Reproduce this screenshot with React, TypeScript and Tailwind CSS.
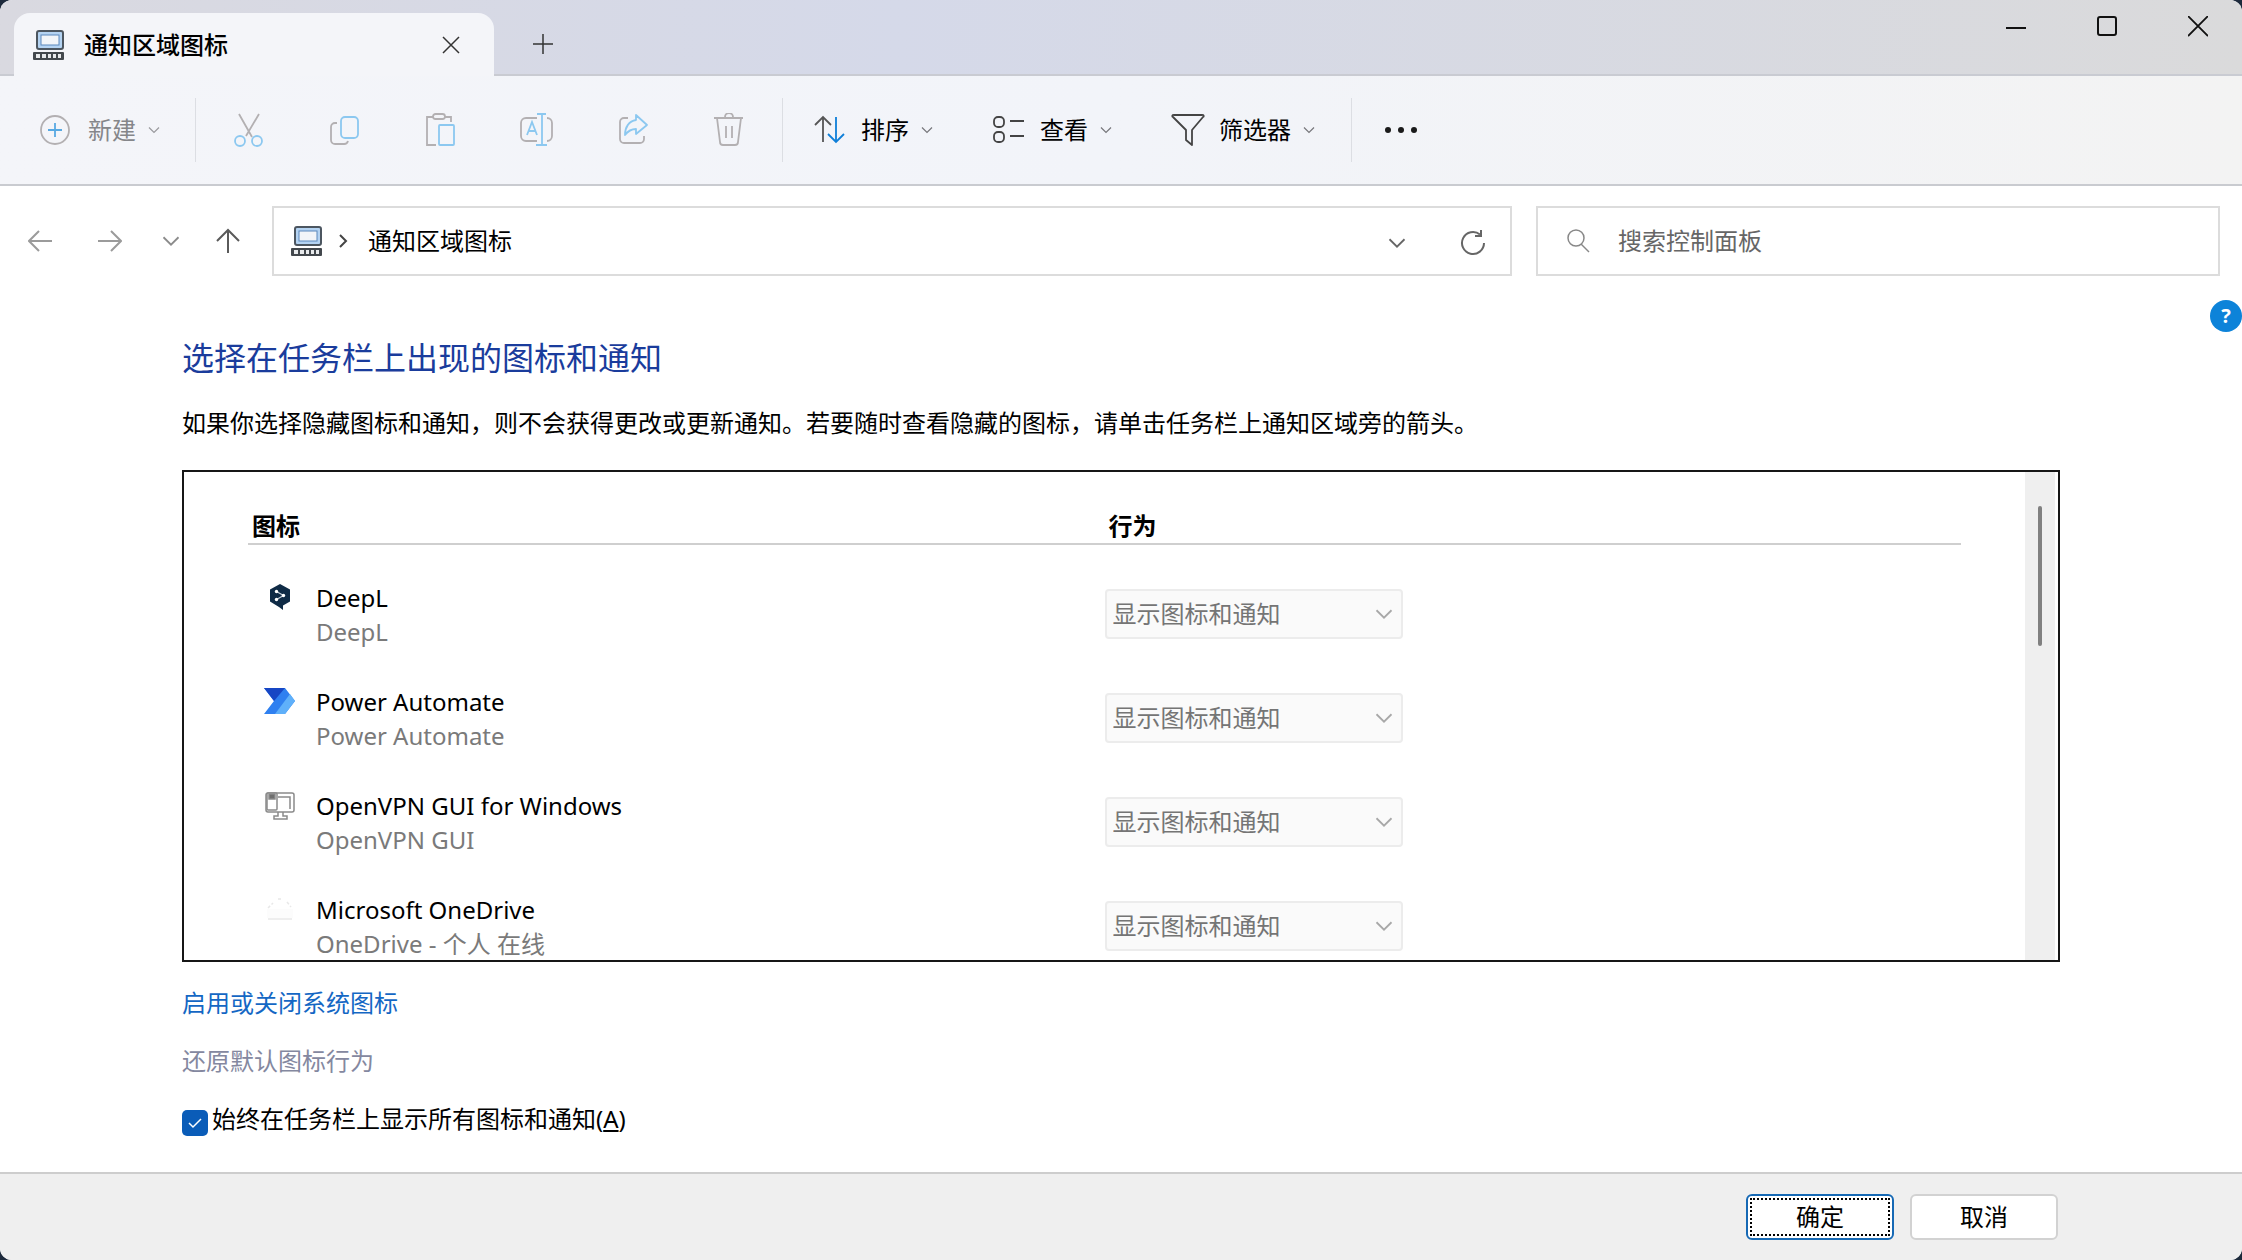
import type { ReactNode } from 'react'

type TrayItem = {
  name: string
  detail: string
  icon: ReactNode
}

const grey = '#b3b0b2'
const blue = '#8cc8f0'

function TaskbarIcon() {
  return (
    <svg width="34" height="34" viewBox="0 0 34 34" fill="none" className="shrink-0">
      <rect x="5" y="3" width="26" height="18" rx="2" fill="#b4d3f2" stroke="#4c5660" strokeWidth="2" />
      <rect x="9" y="7" width="18" height="10" fill="#f2f5f9" stroke="#5a88bc" strokeWidth="1" />
      <rect x="1" y="24" width="31" height="8" rx="1" fill="#43484d" />
      <path d="M4 26h4v4H4zM10 26h4v4h-4zM16 26h3v4h-3zM21 26h3v4h-3zM26 26h3v4h-3z" fill="#e8eaec" />
    </svg>
  )
}

function Chevron({ className = '', size = 12 }: { className?: string; size?: number }) {
  return (
    <svg width={size} height={size} viewBox="0 0 12 12" fill="none" stroke="currentColor" className={className}>
      <path d="M1 3.5l5 5 5-5" strokeWidth="1.2" />
    </svg>
  )
}

const deepl = (
  <svg width="24" height="28" viewBox="0 0 24 28">
    <path d="M12 1l10 5.5v12L15 22.5V27l-4-3-9-5.5v-12z" fill="#0f2b46" />
    <path d="M8.5 8.5l7 4-7 4" stroke="#c6d0da" strokeWidth="1.2" fill="none" />
    <circle cx="8.5" cy="8.5" r="1.7" fill="#fff" />
    <circle cx="15.5" cy="12.5" r="1.7" fill="#fff" />
    <circle cx="8.5" cy="16.5" r="1.7" fill="#fff" />
  </svg>
)

const powerAutomate = (
  <svg width="34" height="28" viewBox="0 0 34 28">
    <path d="M1 1h21l10 13-10 13H1l10-13z" fill="#2f80f0" />
    <path d="M27 7l5 7-10 13H12z" fill="#5fb0fa" />
    <path d="M1 1h21L11 14z" fill="#1746c4" />
  </svg>
)

const openVpn = (
  <svg width="32" height="30" viewBox="0 0 32 30" fill="none" stroke="#8a8a8a" strokeWidth="1.5">
    <rect x="2" y="2" width="28" height="19" rx="2" />
    <path d="M14 6h12v12" />
    <rect x="3" y="2" width="10" height="17" rx="1" fill="#fff" />
    <path d="M5 3h6v5H5z" fill="#6f6f6f" />
    <path d="M14 21v4h-4v3h13v-3h-4v-4" />
  </svg>
)

const oneDrive = (
  <svg width="32" height="28" viewBox="0 0 32 28" fill="none" stroke="#e8e8e8" strokeWidth="1.5">
    <path d="M3 14v9h26v-9z" fill="#fcfcfc" stroke="none" />
    <path d="M4 24h24" />
    <path d="M4 13l5-5M14 4h4M23 7l4 5" strokeDasharray="3 2" />
  </svg>
)

const items: TrayItem[] = [
  { name: 'DeepL', detail: 'DeepL', icon: deepl },
  { name: 'Power Automate', detail: 'Power Automate', icon: powerAutomate },
  { name: 'OpenVPN GUI for Windows', detail: 'OpenVPN GUI', icon: openVpn },
  { name: 'Microsoft OneDrive', detail: 'OneDrive - 个人 在线', icon: oneDrive },
]

const editActions = [
  {
    label: '剪切',
    icon: (
      <>
        <path d="M7 1l13 23M27 1L14 23" stroke={grey} />
        <circle cx="8" cy="28" r="5" stroke={blue} />
        <circle cx="25" cy="28" r="5" stroke={blue} />
      </>
    ),
  },
  {
    label: '复制',
    icon: (
      <>
        <path d="M9 10H7a4 4 0 0 0-4 4v13a4 4 0 0 0 4 4h9a4 4 0 0 0 4-3" stroke={grey} />
        <rect x="13" y="4" width="17" height="21" rx="4" stroke={blue} />
      </>
    ),
  },
  {
    label: '粘贴',
    icon: (
      <>
        <path d="M10 4H3v28h9M21 4h6v5" stroke={grey} />
        <rect x="9" y="1" width="12" height="5" rx="2.5" stroke={grey} />
        <rect x="15" y="12" width="15" height="20" rx="1" stroke={blue} />
      </>
    ),
  },
  {
    label: '重命名',
    icon: (
      <>
        <path d="M17 5H6a5 5 0 0 0-5 5v13a5 5 0 0 0 5 5h11M27 5a5 5 0 0 1 5 5v13a5 5 0 0 1-5 5" stroke={grey} />
        <path d="M17 1h9M22 1v31M16 32h11M7 22l5-13 5 13M9 18h6" stroke={blue} />
      </>
    ),
  },
  {
    label: '共享',
    icon: (
      <>
        <path d="M12 5H8a4 4 0 0 0-4 4v17a4 4 0 0 0 4 4h16a4 4 0 0 0 4-4v-3" stroke={grey} />
        <path d="M20 2l11 10-11 9v-5c-5 0-8 2-11 6 0-8 4-14 11-15z" stroke={blue} strokeLinejoin="round" />
      </>
    ),
  },
  {
    label: '删除',
    icon: (
      <path
        d="M2 5h29M13 5V4a4 4 0 0 1 8 0v1M5 5l3 24a3 3 0 0 0 3 3h12a3 3 0 0 0 3-3l3-24M14 13v12M20 13v12"
        stroke={grey}
      />
    ),
  },
]

const viewActions = [
  {
    label: '排序',
    icon: (
      <>
        <path d="M10 29V4M2 12l8-8 8 8" stroke="#555" />
        <path d="M23 4v25M15 21l8 8 8-8" stroke="#0f7fd8" />
      </>
    ),
  },
  {
    label: '查看',
    icon: (
      <>
        <rect x="2" y="4" width="10" height="10" rx="4" stroke="#444" />
        <rect x="2" y="19" width="10" height="10" rx="4" stroke="#444" />
        <path d="M18 8h14M18 23h14" stroke="#444" />
      </>
    ),
  },
  {
    label: '筛选器',
    icon: <path d="M3 2h28a1 1 0 0 1 1 2L21 17v15l-6-5V17L2 4a1 1 0 0 1 1-2z" stroke="#444" strokeLinejoin="round" />,
  },
]

function ToolIcon({ children }: { children: ReactNode }) {
  return (
    <svg width="34" height="34" viewBox="0 0 34 34" fill="none" strokeWidth="1.8" className="shrink-0">
      {children}
    </svg>
  )
}

function Divider() {
  return <div className="h-16 w-px shrink-0 bg-[#dcdee3]" />
}

function TitleBar() {
  return (
    <header className="flex h-[76px] items-end border-b-2 border-[#c9cbd2] bg-linear-to-r from-[#d9d9e0] via-[#d5d9e9] via-40% to-[#dadadb]">
      <div className="relative -mb-0.5 ml-3.5 flex h-[63px] w-[480px] items-center rounded-t-2xl bg-[#f4f5f9] pl-[18px] pr-[30px]">
        <TaskbarIcon />
        <span className="ml-[18px] flex-1 font-medium">通知区域图标</span>
        <button aria-label="关闭标签页" className="p-1">
          <svg width="18" height="18" viewBox="0 0 18 18" stroke="#333" strokeWidth="1.5">
            <path d="M1 1l16 16M17 1L1 17" />
          </svg>
        </button>
      </div>
      <button aria-label="新建标签页" className="ml-9 flex h-[60px] items-center">
        <svg width="26" height="22" viewBox="0 0 22 22" stroke="#333" strokeWidth="1.5">
          <path d="M11 1v20M1 11h20" />
        </svg>
      </button>
      <div className="ml-auto flex gap-[71px] self-start pr-[34px] pt-4">
        <button aria-label="最小化">
          <svg width="20" height="22" viewBox="0 0 20 22" stroke="#111" strokeWidth="2">
            <path d="M0 12h20" />
          </svg>
        </button>
        <button aria-label="最大化">
          <svg width="20" height="22" viewBox="0 0 20 22" fill="none" stroke="#111" strokeWidth="2">
            <rect x="1" y="1" width="18" height="18" rx="2" />
          </svg>
        </button>
        <button aria-label="关闭">
          <svg width="20" height="22" viewBox="0 0 20 22" stroke="#111" strokeWidth="1.8">
            <path d="M0 0l20 20M20 0L0 20" />
          </svg>
        </button>
      </div>
    </header>
  )
}

function Toolbar() {
  return (
    <div className="flex h-[110px] items-center border-b-2 border-[#c9cbd0] bg-linear-to-r from-[#f4f5f9] via-[#f2f4f9] to-[#f3f3f3] pl-[38px]">
      <button disabled className="flex w-[157px] items-center text-[#85868a]">
        <ToolIcon>
          <circle cx="17" cy="17" r="14" stroke={grey} />
          <path d="M17 10v14M10 17h14" stroke="#58a9e2" />
        </ToolIcon>
        <span className="ml-4">新建</span>
        <Chevron className="ml-3 text-[#9a9a9e]" />
      </button>
      <Divider />
      <div className="flex gap-[62px] px-9">
        {editActions.map((action) => (
          <button key={action.label} disabled aria-label={action.label}>
            <ToolIcon>{action.icon}</ToolIcon>
          </button>
        ))}
      </div>
      <Divider />
      <div className="flex gap-[59px] pl-[30px] pr-9">
        {viewActions.map((action) => (
          <button key={action.label} className="flex items-center">
            <ToolIcon>{action.icon}</ToolIcon>
            <span className="ml-3.5">{action.label}</span>
            <Chevron className="ml-3 text-[#77777b]" />
          </button>
        ))}
      </div>
      <Divider />
      <button aria-label="更多" className="ml-8">
        <svg width="34" height="8" viewBox="0 0 34 8" fill="#1a1a1a">
          <circle cx="4" cy="4" r="3" />
          <circle cx="17" cy="4" r="3" />
          <circle cx="30" cy="4" r="3" />
        </svg>
      </button>
    </div>
  )
}

function AddressRow() {
  return (
    <div className="flex items-center py-5 pl-7 pr-[22px]">
      <nav className="flex w-[244px] shrink-0 items-center">
        <button aria-label="后退" className="text-[#9b9b9b]">
          <svg width="24" height="24" viewBox="0 0 24 24" fill="none" stroke="currentColor" strokeWidth="2">
            <path d="M24 12H1M11 2L1 12l10 10" />
          </svg>
        </button>
        <button aria-label="前进" className="ml-[46px] text-[#9b9b9b]">
          <svg width="24" height="24" viewBox="0 0 24 24" fill="none" stroke="currentColor" strokeWidth="2">
            <path d="M0 12h23M13 2l10 10-10 10" />
          </svg>
        </button>
        <button aria-label="最近位置" className="ml-10 text-[#8b8b8b]">
          <Chevron size={18} />
        </button>
        <button aria-label="向上" className="ml-9 text-[#5a5a5a]">
          <svg width="24" height="26" viewBox="0 0 24 26" fill="none" stroke="currentColor" strokeWidth="2">
            <path d="M12 25V2M1 13L12 2l11 11" />
          </svg>
        </button>
      </nav>
      <div className="flex h-[70px] flex-1 items-center border-2 border-[#dcdcdc] pl-4 pr-6">
        <TaskbarIcon />
        <svg width="10" height="14" viewBox="0 0 10 14" fill="none" stroke="#444" strokeWidth="2" className="ml-3.5">
          <path d="M2 1l6 6-6 6" />
        </svg>
        <span className="ml-5 flex-1">通知区域图标</span>
        <div className="flex items-center pt-1">
          <button aria-label="历史记录" className="text-[#666]">
            <Chevron size={18} />
          </button>
          <button aria-label="刷新" className="ml-[54px]">
            <svg width="26" height="26" viewBox="0 0 26 26" fill="none" stroke="#666" strokeWidth="2">
              <path d="M24 13a11 11 0 1 1-4-8.500M21 0v6h-6" />
            </svg>
          </button>
        </div>
      </div>
      <label className="ml-6 flex h-[70px] w-2/5 max-w-[684px] items-center border-2 border-[#dcdcdc] pl-7">
        <svg width="24" height="24" viewBox="0 0 24 24" fill="none" stroke="#888" strokeWidth="1.5">
          <circle cx="10" cy="9" r="8" />
          <path d="M15 15l8 8" />
        </svg>
        <input
          type="search"
          aria-label="搜索控制面板"
          placeholder="搜索控制面板"
          className="ml-7 w-0 flex-1 outline-none placeholder:text-[#666]"
        />
      </label>
    </div>
  )
}

function TrayList() {
  return (
    <div className="flex h-[492px] border-2 border-[#161616]">
      <div className="flex-1 overflow-hidden px-16 pt-9">
        <table className="w-full table-fixed border-collapse text-left">
          <thead>
            <tr className="h-9 border-b-2 border-[#cfcfcf]">
              <th className="w-1/2 p-0 pl-1">图标</th>
              <th className="p-0 pl-1">行为</th>
            </tr>
          </thead>
          <tbody>
            {items.map((item) => (
              <tr key={item.name} className="h-[104px] align-top">
                <td className="p-0 pt-9">
                  <div className="flex">
                    <div className="flex w-16 shrink-0 justify-center pt-0.5">{item.icon}</div>
                    <div className="pl-1">
                      <div>{item.name}</div>
                      <div className="text-[#7a7a7a]">{item.detail}</div>
                    </div>
                  </div>
                </td>
                <td className="p-0 pt-11">
                  <div className="relative w-[298px]">
                    <select
                      disabled
                      aria-label={`${item.name} 行为`}
                      className="h-[50px] w-full appearance-none rounded-sm border-2 border-[#ececec] bg-[#fafafa] pl-1.5 text-[#757575] opacity-100"
                    >
                      <option>显示图标和通知</option>
                    </select>
                    <Chevron size={18} className="pointer-events-none absolute right-2.5 top-4 text-[#a8a8a8]" />
                  </div>
                </td>
              </tr>
            ))}
          </tbody>
        </table>
      </div>
      <div className="mr-[3px] flex w-[30px] justify-center bg-[#efefef] pt-[34px]">
        <div className="h-[140px] w-1 rounded-full bg-[#808080]" />
      </div>
    </div>
  )
}

export default function App() {
  return (
    <div className="bg-[#1d2a3c]">
      <div className="flex min-h-screen flex-col overflow-hidden rounded-xl bg-white font-['Noto_Sans','Noto_Sans_CJK_SC',sans-serif] text-2xl leading-[34px] text-black">
        <TitleBar />
        <Toolbar />
        <AddressRow />

        <button
          aria-label="帮助"
          className="mt-1 flex size-8 items-center justify-center self-end rounded-full bg-[#0d83d9] text-xl font-bold text-white"
        >
          ?
        </button>

        <main className="flex-1 px-[182px] pt-0.5">
          <h1 className="text-[32px] leading-[48px] text-[#1a3c9c]">选择在任务栏上出现的图标和通知</h1>
          <p className="mb-[30px] mt-6">
            如果你选择隐藏图标和通知，则不会获得更改或更新通知。若要随时查看隐藏的图标，请单击任务栏上通知区域旁的箭头。
          </p>
          <TrayList />
          <div className="flex flex-col items-start gap-6 pt-6">
            <a href="#system-icons" className="text-[#1467c4]">
              启用或关闭系统图标
            </a>
            <a href="#restore" className="text-[#8488a0]">
              还原默认图标行为
            </a>
            <label className="flex items-end gap-1">
              <span className="relative flex">
                <input type="checkbox" defaultChecked className="size-[26px] appearance-none rounded-[5px] bg-[#0a5cb8]" />
                <svg
                  viewBox="0 0 26 26"
                  fill="none"
                  stroke="#fff"
                  strokeWidth="1.5"
                  className="pointer-events-none absolute inset-0 size-[26px]"
                >
                  <path d="M7 13l4 4 8-8" />
                </svg>
              </span>
              <span>
                始终在任务栏上显示所有图标和通知(<u>A</u>)
              </span>
            </label>
          </div>
        </main>

        <footer className="flex h-[88px] justify-end gap-4 border-t-2 border-[#cdcdcd] bg-[#efefef] pr-[184px] pt-5">
          <button className="h-[46px] w-[148px] rounded-md border-2 border-[#1669b5] bg-white p-0.5">
            <span className="flex h-full items-center justify-center border-2 border-dotted border-black">确定</span>
          </button>
          <button className="h-[46px] w-[148px] rounded-md border-2 border-[#d2d2d2] bg-white">取消</button>
        </footer>
      </div>
    </div>
  )
}
